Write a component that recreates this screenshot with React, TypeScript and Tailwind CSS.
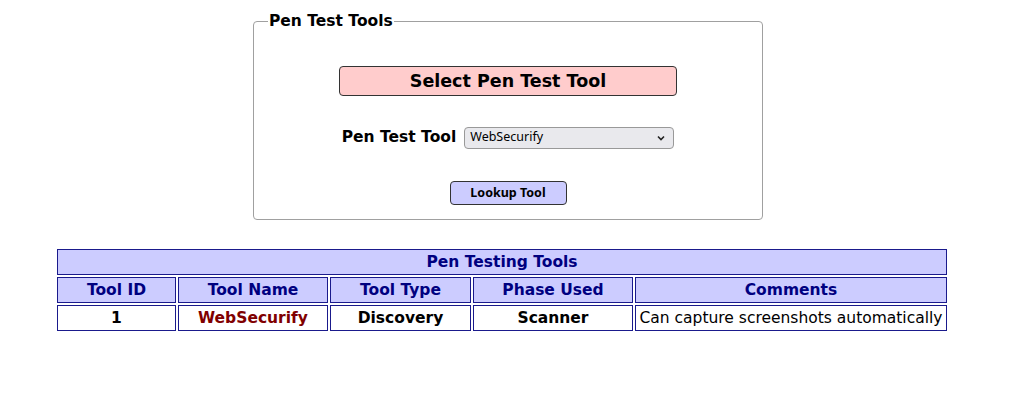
const cols = [
  { label: 'Tool ID', w: 'w-[119px]' },
  { label: 'Tool Name', w: 'w-[150px]' },
  { label: 'Tool Type', w: 'w-[141px]' },
  { label: 'Phase Used', w: 'w-[160px]' },
  { label: 'Comments', w: '' },
]

const App = () => {
  return (
    <div className="h-[394px] w-[1024px] bg-white font-['DejaVu_Sans',sans-serif] text-black">
      <div className="pt-[12px]">
        <fieldset className="ml-[253px] h-[208px] w-[510px] rounded-[4px] border border-[#a0a0a0] px-[14px]">
          <legend className="px-[1px] text-[15.5px] font-bold leading-[18px]">Pen Test Tools</legend>
          <div className="flex flex-col items-center">
            <div className="mt-[36px] flex h-[30px] w-[338px] items-center justify-center rounded-[4px] border border-[#333] bg-[#ffcccc] text-[17.5px] font-bold">
              Select Pen Test Tool
            </div>
            <div className="mt-[30px] flex items-center gap-[8px]">
              <span className="text-[15.5px] font-bold">Pen Test Tool</span>
              <div className="flex h-[22px] w-[210px] items-center justify-between rounded-[4px] border border-[#999] bg-[#e9e9ed] pl-[5px] pr-[7px] font-['Noto_Sans',sans-serif] text-[12.5px]">
                <span>WebSecurify</span>
                <svg width="10" height="10" viewBox="0 0 10 10" fill="none" stroke="#222" strokeWidth="1.6">
                  <path d="M2 3.5 L5 6.5 L8 3.5" />
                </svg>
              </div>
            </div>
            <div className="mt-[32px] flex h-[24px] w-[117px] items-center justify-center rounded-[4px] border border-[#333] bg-[#ccccff] font-['Noto_Sans',sans-serif] text-[12.5px] font-bold">
              Lookup Tool
            </div>
          </div>
        </fieldset>
      </div>
      <div className="ml-[57px] mt-[29px] flex w-[890px] flex-col gap-[2px] text-[15.5px] font-bold">
        <div className="flex h-[26px] items-center justify-center border border-[#1a1a8c] bg-[#ccccff] pt-[2px] text-[#000080]">
          Pen Testing Tools
        </div>
        <div className="flex gap-[2px]">
          {cols.map((c) => (
            <div
              key={c.label}
              className={`${c.w || 'flex-1'} flex h-[26px] items-center justify-center border border-[#1a1a8c] bg-[#ccccff] pt-[2px] text-[#000080]`}
            >
              {c.label}
            </div>
          ))}
        </div>
        <div className="flex gap-[2px]">
          <div className="flex h-[26px] w-[119px] items-center justify-center border border-[#1a1a8c] pt-[2px]">1</div>
          <div className="flex h-[26px] w-[150px] items-center justify-center border border-[#1a1a8c] pt-[2px] text-[#800000]">WebSecurify</div>
          <div className="flex h-[26px] w-[141px] items-center justify-center border border-[#1a1a8c] pt-[2px]">Discovery</div>
          <div className="flex h-[26px] w-[160px] items-center justify-center border border-[#1a1a8c] pt-[2px]">Scanner</div>
          <div className="flex h-[26px] flex-1 items-center justify-center border border-[#1a1a8c] pt-[2px] font-normal">
            Can capture screenshots automatically
          </div>
        </div>
      </div>
    </div>
  )
}

export default App
